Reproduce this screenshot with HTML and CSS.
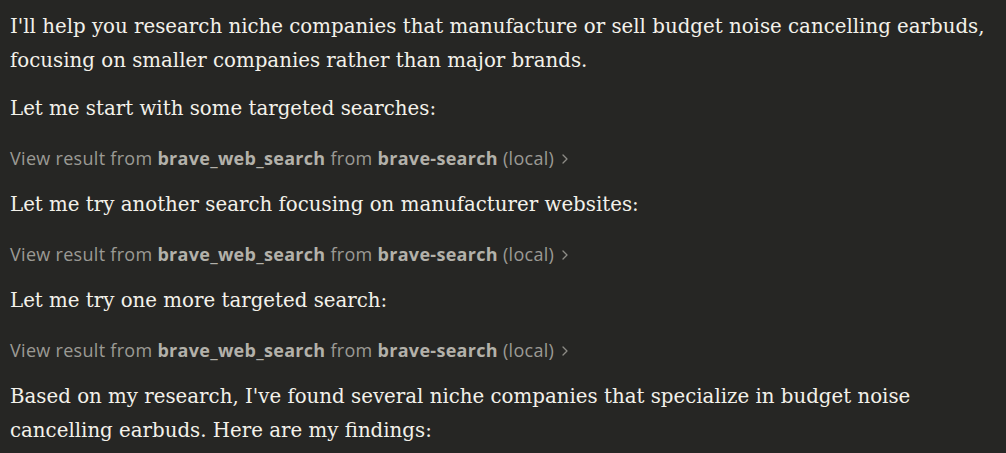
FILE: index.html
```html
<!DOCTYPE html>
<html lang="en">
<head>
<meta charset="utf-8">
<title>Research</title>
<link rel="stylesheet" href="styles.css">
</head>
<body>
<main class="message">
  <p class="para">I'll help you research niche companies that manufacture or sell budget noise cancelling earbuds, focusing on smaller companies rather than major brands.</p>
  <p class="para">Let me start with some targeted searches:</p>
  <div class="tool-row">View result from <b class="strong">brave_web_search</b> from <b class="strong">brave-search</b> (local) <span class="chev"><svg width="8" height="12" viewBox="0 0 8 12"><path d="M2 2l4 4-4 4" fill="none" stroke="currentColor" stroke-width="1.3" stroke-linecap="round" stroke-linejoin="round"/></svg></span></div>
  <p class="para">Let me try another search focusing on manufacturer websites:</p>
  <div class="tool-row">View result from <b class="strong">brave_web_search</b> from <b class="strong">brave-search</b> (local) <span class="chev"><svg width="8" height="12" viewBox="0 0 8 12"><path d="M2 2l4 4-4 4" fill="none" stroke="currentColor" stroke-width="1.3" stroke-linecap="round" stroke-linejoin="round"/></svg></span></div>
  <p class="para">Let me try one more targeted search:</p>
  <div class="tool-row">View result from <b class="strong">brave_web_search</b> from <b class="strong">brave-search</b> (local) <span class="chev"><svg width="8" height="12" viewBox="0 0 8 12"><path d="M2 2l4 4-4 4" fill="none" stroke="currentColor" stroke-width="1.3" stroke-linecap="round" stroke-linejoin="round"/></svg></span></div>
  <p class="para">Based on my research, I've found several niche companies that specialize in budget noise cancelling earbuds. Here are my findings:</p>
</main>
</body>
</html>
```

FILE: styles.css
```css
html, body {
  margin: 0;
  padding: 0;
  background: #262624;
}
.message {
  padding: 10px 14px 0 10px;
  width: 1006px;
  box-sizing: border-box;
}
.para {
  margin: 0;
  font-family: "DejaVu Serif", serif;
  font-size: 19.8px;
  line-height: 34px;
  color: #f3f1ea;
}
.para + .para {
  margin-top: 14px;
}
.tool-row {
  margin: 20px 0 18px 0;
  font-family: "Open Sans", "Liberation Sans", sans-serif;
  font-size: 18px;
  letter-spacing: 0.3px;
  line-height: 24px;
  color: #9b9a94;
}
.strong {
  font-weight: 700;
  color: #b3b1aa;
}
.chev {
  display: inline-block;
  margin-left: 2px;
  color: #8d8c86;
}
```
